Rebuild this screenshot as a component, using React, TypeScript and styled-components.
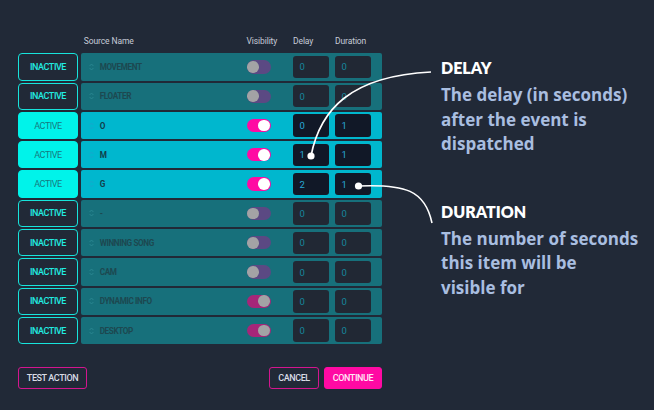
import React from 'react'
import styled, { createGlobalStyle, css } from 'styled-components'

const Colors = {
  page: '#212937',
  cyan: '#17e4dc',
  cyanFill: '#00f3ea',
  rowOff: '#17707b',
  rowOn: '#00b7ce',
  pink: '#ff0aa3',
  pinkDim: '#a62679',
  label: '#c6cbd7',
  copy: '#a9bee0',
}

const GlobalStyle = createGlobalStyle`
  html, body {
    margin: 0;
    padding: 0;
    background: ${Colors.page};
  }
  * {
    box-sizing: border-box;
  }
`

type Visibility = 'on' | 'off' | 'locked'

interface Source {
  name: string
  active: boolean
  visibility: Visibility
  delay: number
  duration: number
}

const sources: Source[] = [
  { name: 'MOVEMENT', active: false, visibility: 'off', delay: 0, duration: 0 },
  { name: 'FLOATER', active: false, visibility: 'off', delay: 0, duration: 0 },
  { name: 'O', active: true, visibility: 'on', delay: 0, duration: 1 },
  { name: 'M', active: true, visibility: 'on', delay: 1, duration: 1 },
  { name: 'G', active: true, visibility: 'on', delay: 2, duration: 1 },
  { name: '-', active: false, visibility: 'off', delay: 0, duration: 0 },
  { name: 'WINNING SONG', active: false, visibility: 'off', delay: 0, duration: 0 },
  { name: 'CAM', active: false, visibility: 'off', delay: 0, duration: 0 },
  { name: 'DYNAMIC INFO', active: false, visibility: 'locked', delay: 0, duration: 0 },
  { name: 'DESKTOP', active: false, visibility: 'locked', delay: 0, duration: 0 },
]

const Page = styled.div`
  position: relative;
  display: flex;
  width: 654px;
  height: 410px;
  background: ${Colors.page};
  overflow: hidden;
`

const Editor = styled.section`
  display: flex;
  flex-direction: column;
  width: 382px;
  padding: 33px 0 0 18px;
  font-family: Roboto, 'Liberation Sans', sans-serif;
`

const Line = styled.div`
  display: grid;
  grid-template-columns: 60px 1fr;
  column-gap: 2.7px;
`

const Cells = styled.div`
  display: grid;
  grid-template-columns: 1fr 46px 42px 36.5px;
  align-items: center;
  padding-right: 11px;
`

const HeaderLine = styled(Line)`
  height: 16px;
  margin-bottom: 4.3px;
  align-items: center;
`

const HeaderCells = styled(Cells)`
  font-size: 8.5px;
  color: ${Colors.label};
  letter-spacing: -0.1px;
`

const HeadLabel = styled.span<{ $indent?: number }>`
  padding-left: ${(p) => p.$indent ?? 0}px;
`

const Rows = styled.div`
  display: flex;
  flex-direction: column;
  gap: 2px;
`

const StateButton = styled.button<{ $active: boolean }>`
  height: 27.3px;
  border: 1.5px solid ${Colors.cyan};
  border-radius: 4px;
  font-family: Roboto, 'Liberation Sans', sans-serif;
  font-size: 9px;
  font-weight: 500;
  letter-spacing: -0.45px;
  padding: 0;
  ${(p) =>
    p.$active
      ? css`
          background: ${Colors.cyanFill};
          border-color: ${Colors.cyanFill};
          color: #177a80;
          font-weight: 400;
        `
      : css`
          background: ${Colors.page};
          color: #22ece2;
        `}
`

const Panel = styled(Cells)<{ $active: boolean }>`
  height: 27.3px;
  border-radius: 2px;
  background: ${(p) => (p.$active ? Colors.rowOn : Colors.rowOff)};
`

const NameCell = styled.div<{ $active: boolean }>`
  display: flex;
  align-items: center;
  gap: 6px;
  padding-left: 8px;
  font-size: 8.2px;
  font-weight: 700;
  letter-spacing: -0.4px;
  color: ${(p) => (p.$active ? '#123e4b' : '#1d4850')};
`

const Track = styled.div<{ $state: Visibility }>`
  display: flex;
  align-items: center;
  width: 24px;
  height: 13.3px;
  border-radius: 7px;
  padding: 0 0.8px;
  justify-content: ${(p) => (p.$state === 'off' ? 'flex-start' : 'flex-end')};
  background: ${(p) =>
    p.$state === 'on' ? Colors.pink : p.$state === 'locked' ? Colors.pinkDim : '#5b4983'};
`

const Knob = styled.span<{ $state: Visibility }>`
  width: 11.7px;
  height: 11.7px;
  border-radius: 50%;
  background: ${(p) => (p.$state === 'on' ? '#ffffff' : '#a3a3a5')};
`

const NumberBox = styled.div<{ $active: boolean }>`
  display: flex;
  align-items: center;
  width: 36.5px;
  height: 22.4px;
  padding-left: 7px;
  border-radius: 3px;
  font-size: 9.5px;
  background: ${(p) => (p.$active ? '#111827' : '#212834')};
  color: ${(p) => (p.$active ? '#28a9d8' : '#15869d')};
`

const Footer = styled.footer`
  display: flex;
  justify-content: space-between;
  margin-top: 22.7px;
`

const FooterGroup = styled.div`
  display: flex;
  gap: 5px;
`

const ActionButton = styled.button<{ $width: number; $filled?: boolean }>`
  width: ${(p) => p.$width}px;
  height: 22px;
  padding: 0;
  border-radius: 3px;
  border: 1.5px solid ${Colors.pink};
  font-family: Roboto, 'Liberation Sans', sans-serif;
  font-size: 9px;
  font-weight: 500;
  letter-spacing: -0.4px;
  background: ${(p) => (p.$filled ? Colors.pink : 'transparent')};
  color: ${(p) => (p.$filled ? '#ffe8f6' : '#d9dce6')};
  ${(p) =>
    !p.$filled &&
    css`
      border-color: #d4158f;
    `}
`

const Notes = styled.aside`
  display: flex;
  flex-direction: column;
  padding: 58px 0 0 59px;
  font-weight: 700;
`

const Note = styled.div<{ $gap?: number }>`
  margin-top: ${(p) => p.$gap ?? 0}px;
`

const NoteTitle = styled.h3`
  margin: 0 0 5px;
  font-family: Lato, 'Open Sans', sans-serif;
  font-size: 16px;
  line-height: 20px;
  font-weight: 800;
  color: #ffffff;
`

const NoteText = styled.p`
  margin: 0;
  font-family: 'Open Sans', Lato, sans-serif;
  font-size: 17px;
  line-height: 24.7px;
  font-weight: 700;
  color: ${Colors.copy};
`

const Leaders = styled.svg`
  position: absolute;
  left: 0;
  top: 0;
  pointer-events: none;
`

function Handle({ active }: { active: boolean }) {
  const c = active ? '#19a6cc' : '#2a8993'
  return (
    <svg width="5" height="8" viewBox="0 0 5 8">
      <path d="M0.6 3 L2.5 1 L4.4 3 M0.6 5 L2.5 7 L4.4 5" fill="none" stroke={c} strokeWidth="0.9" />
    </svg>
  )
}

function SourceRow({ source }: { source: Source }) {
  const { active } = source
  return (
    <Line>
      <StateButton $active={active}>{active ? 'ACTIVE' : 'INACTIVE'}</StateButton>
      <Panel $active={active}>
        <NameCell $active={active}>
          <Handle active={active} />
          {source.name}
        </NameCell>
        <div>
          <Track $state={source.visibility}>
            <Knob $state={source.visibility} />
          </Track>
        </div>
        <NumberBox $active={active}>{source.delay}</NumberBox>
        <NumberBox $active={active}>{source.duration}</NumberBox>
      </Panel>
    </Line>
  )
}

export default function App() {
  return (
    <>
      <GlobalStyle />
      <Page>
        <Editor>
          <HeaderLine>
            <span />
            <HeaderCells>
              <HeadLabel $indent={3}>Source Name</HeadLabel>
              <HeadLabel>Visibility</HeadLabel>
              <HeadLabel $indent={0.5}>Delay</HeadLabel>
              <HeadLabel $indent={0.5}>Duration</HeadLabel>
            </HeaderCells>
          </HeaderLine>
          <Rows>
            {sources.map((s) => (
              <SourceRow key={s.name} source={s} />
            ))}
          </Rows>
          <Footer>
            <ActionButton $width={69}>TEST ACTION</ActionButton>
            <FooterGroup>
              <ActionButton $width={50}>CANCEL</ActionButton>
              <ActionButton $width={58} $filled>
                CONTINUE
              </ActionButton>
            </FooterGroup>
          </Footer>
        </Editor>
        <Notes>
          <Note>
            <NoteTitle>DELAY</NoteTitle>
            <NoteText>
              The delay (in seconds)
              <br />
              after the event is
              <br />
              dispatched
            </NoteText>
          </Note>
          <Note $gap={44.6}>
            <NoteTitle>DURATION</NoteTitle>
            <NoteText>
              The number of seconds
              <br />
              this item will be
              <br />
              visible for
            </NoteText>
          </Note>
        </Notes>
        <Leaders width="654" height="410" viewBox="0 0 654 410">
          <path d="M311 156 C320 110 350 76 431 72" fill="none" stroke="#fff" strokeWidth="1.6" />
          <path d="M358 186 C405 184 425 190 432 223" fill="none" stroke="#fff" strokeWidth="1.6" />
          <circle cx="311" cy="156" r="3.6" fill="#fff" />
          <circle cx="358.5" cy="186" r="3.6" fill="#fff" />
        </Leaders>
      </Page>
    </>
  )
}
